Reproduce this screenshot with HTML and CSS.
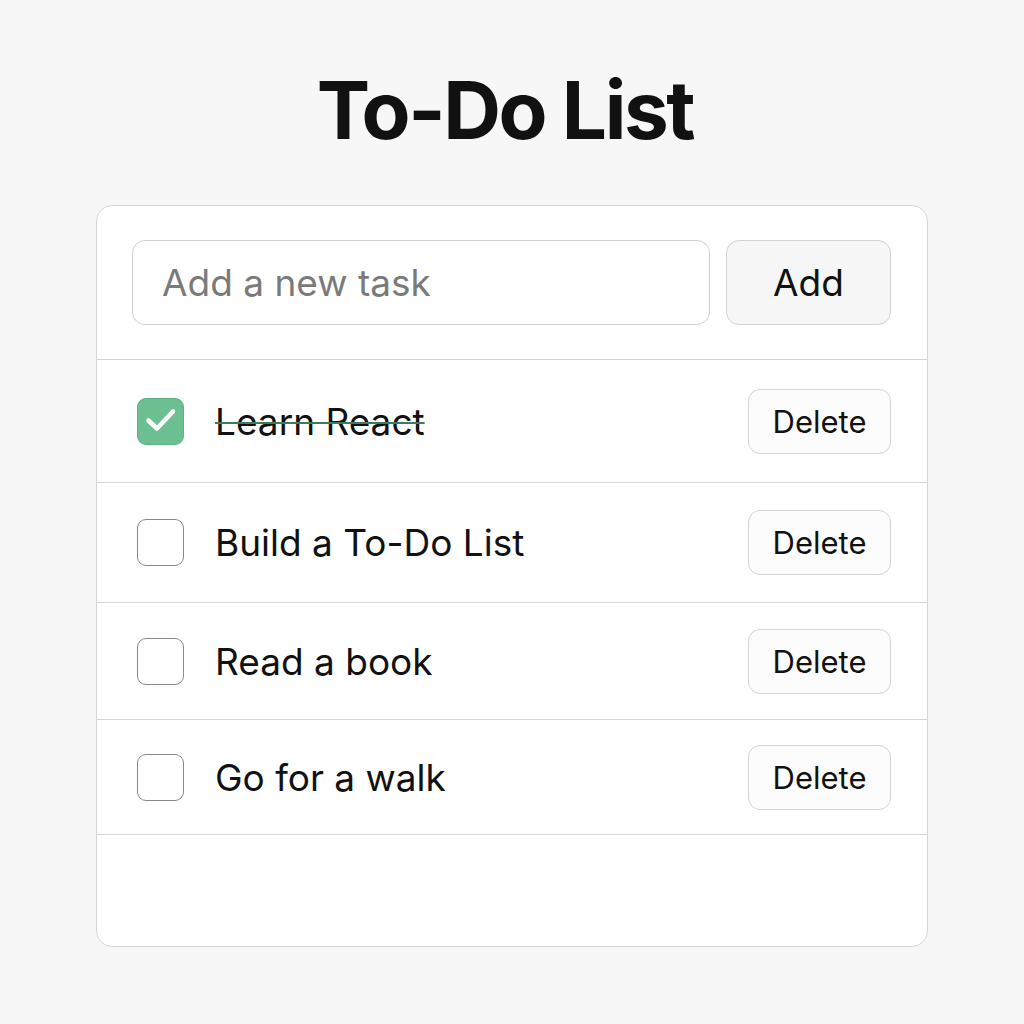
FILE: index.html
```html
<!DOCTYPE html>
<html lang="en">
<head>
<meta charset="utf-8">
<title>To-Do List</title>
<link rel="stylesheet" href="styles.css">
</head>
<body>
<main class="page">
  <h1 class="title">To-Do List</h1>
  <section class="card">
    <form class="add-row">
      <input class="task-input" type="text" placeholder="Add a new task">
      <button class="add-btn" type="button">Add</button>
    </form>
    <ul class="list">
      <li class="item item-1 done">
        <span class="check checked">
          <svg class="tick" viewBox="0 0 47 47" width="47" height="47"><path d="M11.5 23.5l8.5 8L36 14.5" fill="none" stroke="#fff" stroke-width="4.5" stroke-linecap="round" stroke-linejoin="round"/></svg>
        </span>
        <span class="label">Learn React</span>
        <button class="del-btn" type="button">Delete</button>
      </li>
      <li class="item item-2">
        <span class="check"></span>
        <span class="label">Build a To-Do List</span>
        <button class="del-btn" type="button">Delete</button>
      </li>
      <li class="item item-3">
        <span class="check"></span>
        <span class="label">Read a book</span>
        <button class="del-btn" type="button">Delete</button>
      </li>
      <li class="item item-4">
        <span class="check"></span>
        <span class="label">Go for a walk</span>
        <button class="del-btn" type="button">Delete</button>
      </li>
    </ul>
  </section>
</main>
</body>
</html>
```
FILE: styles.css
```css
* { box-sizing: border-box; }
html, body { margin: 0; padding: 0; }
body {
  background: #f7f7f7;
  font-family: Inter, "Noto Sans", sans-serif;
  color: #111;
}
.page {
  width: 1024px;
  display: flex;
  flex-direction: column;
  align-items: center;
  padding-top: 62px;
}
.title {
  margin: 0 14px 0 0;
  font-size: 80px;
  font-weight: 700;
  line-height: 96px;
  letter-spacing: -2.4px;
  color: #111;
}
.card {
  margin-top: 47px;
  width: 832px;
  height: 742px;
  background: #fff;
  border: 1.5px solid #d6d6d6;
  border-radius: 16px;
  overflow: hidden;
}
.add-row {
  display: flex;
  gap: 16px;
  margin: 0;
  padding: 34px 36px 34px 35px;
  border-bottom: 1.5px solid #d4d4d4;
}
.task-input {
  flex: 1;
  min-width: 0;
  height: 85px;
  border: 1.5px solid #cfcfcf;
  border-radius: 13px;
  padding: 0 29px;
  font-family: inherit;
  font-size: 37px;
  color: #111;
  background: #fff;
  outline: none;
}
.task-input::placeholder { color: #7a7a7a; }
.add-btn {
  flex: none;
  width: 165px;
  height: 85px;
  border: 1.5px solid #d2d2d2;
  border-radius: 13px;
  background: #f6f6f6;
  font-family: inherit;
  font-size: 37px;
  color: #111;
}
.list { list-style: none; margin: 0; padding: 0; }
.item {
  display: flex;
  align-items: center;
  height: 119px;
  padding: 0 36px 0 40px;
  border-bottom: 1.5px solid #d6d6d6;
}
.item-1 { height: 123px; }
.item-2 { height: 120px; }
.item-3 { height: 117px; }
.item-4 { height: 115px; }
.check {
  width: 47px;
  height: 47px;
  flex: none;
  border: 1.5px solid #8a8a8a;
  border-radius: 9px;
  position: relative;
}
.check.checked {
  background: #6cbf90;
  border-color: #5fb083;
}
.tick {
  position: absolute;
  left: -1.5px;
  top: -1.5px;
  width: 47px;
  height: 47px;
}
.label {
  flex: 1;
  margin-left: 31px;
  font-size: 37px;
  color: #111;
}
.done .label {
  text-decoration: line-through;
  text-decoration-color: #3f7a5d;
  text-decoration-thickness: 1.5px;
}
.del-btn {
  flex: none;
  width: 143px;
  height: 65px;
  border: 1.5px solid #d4d4d4;
  border-radius: 12px;
  background: #fcfcfc;
  font-family: inherit;
  font-size: 31px;
  color: #111;
}
```
